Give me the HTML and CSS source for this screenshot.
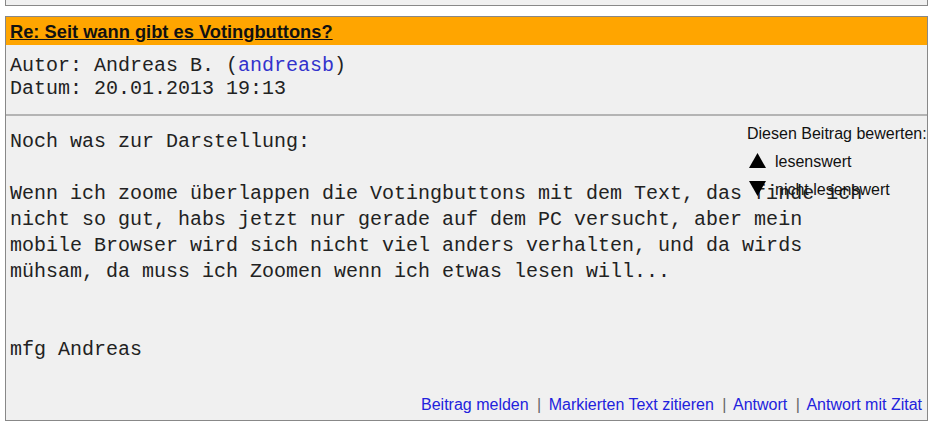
FILE: index.html
```html
<!DOCTYPE html>
<html lang="de">
<head>
  <meta charset="UTF-8" />
  <title>Re: Seit wann gibt es Votingbuttons?</title>
  <link rel="stylesheet" href="styles.css">
</head>
<body>

  <!-- previous post (cut off) -->
  <div class="post post-prev"></div>

  <!-- Post -->
  <div class="post">
    <div class="post-title"><a href="#">Re: Seit wann gibt es Votingbuttons?</a></div>
    <div class="post-meta">
      Autor: Andreas B. (<a href="#">andreasb</a>)<br>
      Datum: 20.01.2013 19:13
    </div>
    <div class="post-body">
      <div class="vote">
        <div>Diesen Beitrag bewerten:</div>
        <div class="vote-row">
          <svg class="arrow" width="17" height="15" viewBox="0 0 17 15"><polygon points="8.5,0 17,15 0,15" fill="#000"/></svg>lesenswert
        </div>
        <div class="vote-row">
          <svg class="arrow" width="17" height="15" viewBox="0 0 17 15"><polygon points="0,0 17,0 8.5,15" fill="#000"/></svg>nicht lesenswert
        </div>
      </div>
      <div class="post-text">Noch was zur Darstellung:<br>
<br>
Wenn ich zoome überlappen die Votingbuttons mit dem Text, das finde ich<br>
nicht so gut, habs jetzt nur gerade auf dem PC versucht, aber mein<br>
mobile Browser wird sich nicht viel anders verhalten, und da wirds<br>
mühsam, da muss ich Zoomen wenn ich etwas lesen will...<br>
<br>
<br>
mfg Andreas</div>
      <div class="post-links">
        <a href="#">Beitrag melden</a> <span class="sep">|</span>
        <a href="#">Markierten Text zitieren</a> <span class="sep">|</span>
        <a href="#">Antwort</a> <span class="sep">|</span>
        <a href="#">Antwort mit Zitat</a>
      </div>
    </div>
  </div>

</body>
</html>
```

FILE: styles.css
```css
body {
  margin: 0 4px 0 5px;
  background: #fff;
  font-family: "Liberation Sans", Arial, sans-serif;
  color: #222;
}

a {
  color: #2222dd;
  text-decoration: none;
}

.post {
  border: 1px solid #888;
  background: #f0f0f0;
}

.post-prev {
  border-top: none;
  height: 5px;
  margin-bottom: 10px;
}

.post-title {
  background: #ffa500;
  height: 28px;
  padding: 0 4px;
  font-size: 18.3px;
  font-weight: bold;
  line-height: 29px;
}

.post-title a {
  color: #111;
  text-decoration: underline;
}

.post-meta {
  font-family: "Liberation Mono", "Courier New", monospace;
  font-size: 20px;
  line-height: 23px;
  padding: 9px 4px 14px;
  border-bottom: 2px solid #b4b4b4;
}

.post-meta a {
  color: #3333cc;
}

.post-body {
  position: relative;
  padding: 13px 4px 0;
}

.post-text {
  font-family: "Liberation Mono", "Courier New", monospace;
  font-size: 20px;
  line-height: 26px;
  min-height: 234px;
}

.vote {
  position: absolute;
  top: 4px;
  left: 741px;
  white-space: nowrap;
  font-size: 16px;
  line-height: 28px;
  color: #111;
}

.vote-row {
  padding-left: 2px;
}

.arrow {
  margin-right: 9px;
  vertical-align: -1px;
}

.post-links {
  text-align: right;
  font-size: 16px;
  line-height: 22px;
  padding: 31px 1px 4px 0;
}

.sep {
  color: #666;
  margin: 0 3px 0 4px;
}
```
